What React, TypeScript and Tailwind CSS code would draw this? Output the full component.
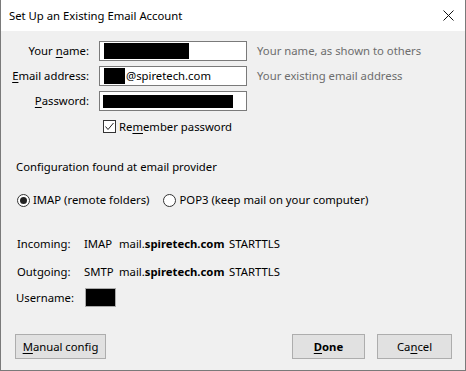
import React from 'react';

const font = { fontFamily: '"Noto Sans", "Open Sans", sans-serif' };

function Key({ children }: { children: React.ReactNode }) {
  return <span className="underline underline-offset-2">{children}</span>;
}

function Redact({ w, h }: { w: number; h: number }) {
  return <span className="inline-block bg-black align-middle" style={{ width: w, height: h }} />;
}

function Radio({ checked, label }: { checked?: boolean; label: string }) {
  return (
    <label className="flex items-center gap-[3px]">
      <span className="w-[13px] h-[13px] rounded-full border border-[#333] bg-white flex items-center justify-center">
        {checked && <span className="w-[7px] h-[7px] rounded-full bg-[#222]" />}
      </span>
      <span>{label}</span>
    </label>
  );
}

function Button({ children, bold, w }: { children: React.ReactNode; bold?: boolean; w: string }) {
  return (
    <button className={`h-[25px] ${w} bg-[#e1e1e1] border border-[#adadad] text-[11.3px] text-black ${bold ? 'font-bold' : ''}`}>
      {children}
    </button>
  );
}

export default function App() {
  return (
    <div
      className="w-[466px] h-[371px] bg-[#f0f0f0] border-x border-b border-[#7a7a7a] text-[11.3px] leading-[16px] text-black flex flex-col"
      style={font}
    >
      {/* Title bar */}
      <div className="h-[31px] bg-white flex items-center justify-between pl-[8px] pr-[10px] shrink-0">
        <span>Set Up an Existing Email Account</span>
        <svg width="11" height="11" viewBox="0 0 11 11" className="mr-[1px]">
          <path d="M0.5 0.5 L10.5 10.5 M10.5 0.5 L0.5 10.5" stroke="#111" strokeWidth="1" />
        </svg>
      </div>

      <div className="flex flex-col pt-[10px]">
        {/* Account fields */}
        <div className="grid grid-cols-[88px_148px_auto] gap-x-[10px] gap-y-[5px] items-center">
          <span className="text-right">Your <Key>n</Key>ame:</span>
          <div className="h-[20px] bg-white border border-[#7a7a7a] flex items-center pl-[4px]">
            <Redact w={85} h={16} />
          </div>
          <span className="text-[#6d6d6d]">Your name, as shown to others</span>

          <span className="text-right"><Key>E</Key>mail address:</span>
          <div className="h-[20px] bg-white border border-[#7a7a7a] flex items-center pl-[4px]">
            <Redact w={21} h={16} />
            <span className="ml-px">@spiretech.com</span>
          </div>
          <span className="text-[#6d6d6d]">Your existing email address</span>

          <span className="text-right"><Key>P</Key>assword:</span>
          <div className="h-[20px] bg-white border border-[#7a7a7a] flex items-center pl-[3px]">
            <Redact w={130} h={13} />
          </div>
          <span />
        </div>

        <label className="flex items-center gap-[3px] mt-[9px] pl-[102px] h-[13px]">
          <span className="w-[13px] h-[13px] border border-[#333] bg-white flex items-center justify-center">
            <svg width="11" height="11" viewBox="0 0 11 11">
              <path d="M1.5 5.5 L4 8.5 L9.5 2" stroke="#222" strokeWidth="1" fill="none" />
            </svg>
          </span>
          <span>Re<Key>m</Key>ember password</span>
        </label>

        <div className="mt-[26px] pl-[15px]">Configuration found at email provider</div>

        <div className="mt-[17px] pl-[16px] flex items-center gap-[14px]">
          <Radio checked label="IMAP (remote folders)" />
          <Radio label="POP3 (keep mail on your computer)" />
        </div>

        {/* Server settings */}
        <div className="mt-[28px] pl-[16px] grid grid-cols-[67px_35px_110px_auto] gap-y-[12px]">
          <span>Incoming:</span>
          <span>IMAP</span>
          <span>mail.<b>spiretech.com</b></span>
          <span>STARTTLS</span>

          <span>Outgoing:</span>
          <span>SMTP</span>
          <span>mail.<b>spiretech.com</b></span>
          <span>STARTTLS</span>
        </div>

        <div className="mt-[8px] pl-[15px] flex items-center h-[19px]">
          <span className="w-[69px]">Username:</span>
          <span className="w-[31px] h-[19px] bg-black border border-[#aaa]" />
        </div>

        {/* Buttons */}
        <div className="mt-[27px] flex items-center pl-[14px] pr-[13px]">
          <Button w="w-[91px]"><Key>M</Key>anual config</Button>
          <div className="flex-1" />
          <Button bold w="w-[73px]"><Key>D</Key>one</Button>
          <div className="w-[12px]" />
          <Button w="w-[75px]">Ca<Key>n</Key>cel</Button>
        </div>
      </div>
    </div>
  );
}
